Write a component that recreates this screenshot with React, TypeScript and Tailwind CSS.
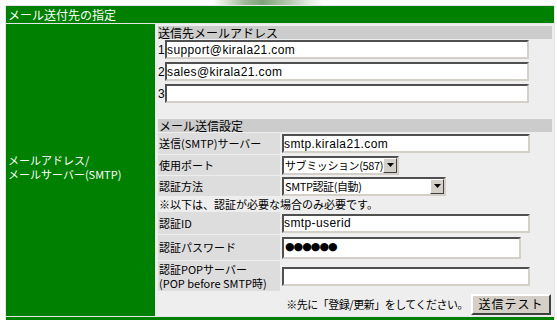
import React from "react";

const inset =
  "border-2 border-t-[#505050] border-l-[#505050] border-b-[#d4d0c8] border-r-[#d4d0c8] bg-white";

function TextBox({ value, w, h = "h-[19px]" }: { value: string; w: string; h?: string }) {
  return (
    <input
      readOnly
      value={value}
      className={`${inset} ${w} ${h} px-0 font-['Liberation_Sans',sans-serif] text-[12px] tracking-[0.4px] text-black outline-none`}
    />
  );
}

function FakeSelect({ label, w }: { label: string; w: string }) {
  return (
    <div className={`${inset} ${w} h-[19px] flex items-center justify-between`}>
      <span className="pl-px text-[11px] leading-[15px] tracking-[-0.4px] whitespace-nowrap">{label}</span>
      <div className="shrink-0 w-[14px] h-[15px] bg-[#d4d0c8] border border-t-white border-l-white border-b-[#404040] border-r-[#404040] flex items-center justify-center">
        <svg width="7" height="4" viewBox="0 0 7 4">
          <path d="M0 0h7L3.5 4z" fill="#000" />
        </svg>
      </div>
    </div>
  );
}

function Row({ label, h, children }: { label: React.ReactNode; h: string; children: React.ReactNode }) {
  return (
    <div className={`flex gap-px ${h}`}>
      <div className="w-[122px] bg-[#dddddd] flex items-center px-px leading-[13px]">{label}</div>
      <div className="flex-1 flex items-center pl-px">{children}</div>
    </div>
  );
}

export default function App() {
  const addresses = ["support@kirala21.com", "sales@kirala21.com", ""];

  return (
    <div className="w-[557px] h-[320px] overflow-hidden bg-white text-black text-[11px] font-['Noto_Sans_CJK_JP','Noto_Sans',sans-serif]">
      {/* 上部の飾り */}
      <div className="h-[5px] bg-[linear-gradient(90deg,#ffffff_0px,#ffffff_212px,#dfe8da_225px,#9fb99a_245px,#7fa27a_262px,#b8cbb2_290px,#e8eee5_310px,#ffffff_325px)]" />

      <div className="ml-[5px] w-[550px] bg-[#e6e6e6] p-px flex flex-col gap-px">
        <div className="h-[17px] bg-[#008000] text-white text-[12px] leading-[17px] pl-[2px]">
          メール送付先の指定
        </div>

        <div className="flex gap-px h-[292px]">
          {/* 左: 項目名 */}
          <div className="w-[149px] bg-[#008000] text-white flex flex-col justify-center pl-[2px] leading-[14px] pb-[6px]">
            <div>メールアドレス/</div>
            <div>メールサーバー(SMTP)</div>
          </div>

          {/* 右: 設定 */}
          <div className="flex-1 bg-[#eeeeee] px-[2px] pt-[2px] flex flex-col">
            <div className="h-[13px] bg-[#cccccc] leading-[13px] text-[12px]">送信先メールアドレス</div>
            <div className="mt-px flex flex-col gap-[3px]">
              {addresses.map((a, i) => (
                <div key={i} className="flex items-center h-[19px]">
                  <span className="w-[7px] text-[12px] font-['Liberation_Sans',sans-serif]">{i + 1}</span>
                  <TextBox value={a} w="w-[364px]" />
                </div>
              ))}
            </div>

            <div className="mt-[16px] h-[13px] bg-[#cccccc] leading-[13px] text-[12px] pl-px">メール送信設定</div>
            <div className="mt-px flex flex-col gap-px">
              <Row label="送信(SMTP)サーバー" h="h-[21px]">
                <TextBox value="smtp.kirala21.com" w="w-[248px]" />
              </Row>
              <Row label="使用ポート" h="h-[20px]">
                <FakeSelect label="サブミッション(587)" w="w-[117px]" />
              </Row>
              <Row label="認証方法" h="h-[20px]">
                <FakeSelect label="SMTP認証(自動)" w="w-[164px]" />
              </Row>
              <div className="h-[14px] leading-[14px] pl-px">※以下は、認証が必要な場合のみ必要です。</div>
              <Row label="認証ID" h="h-[22px]">
                <TextBox value="smtp-userid" w="w-[248px]" />
              </Row>
              <Row label="認証パスワード" h="h-[25px]">
                <div className={`${inset} w-[239px] h-[22px] flex items-center pl-px text-[11px] tracking-[-1px] font-['DejaVu_Sans',sans-serif]`}>
                  ●●●●●●
                </div>
              </Row>
              <Row
                label={
                  <div className="leading-[14px]">
                    <div>認証POPサーバー</div>
                    <div>(POP before SMTP時)</div>
                  </div>
                }
                h="h-[30px]"
              >
                <TextBox value="" w="w-[248px]" />
              </Row>
              <div className="h-[24px] flex items-center justify-end gap-[3px] pr-px">
                <span className="text-[11px] tracking-[-0.5px]">※先に「登録/更新」をしてください。</span>
                <button className="w-[80px] h-[21px] bg-[#d4d0c8] border-2 border-t-white border-l-white border-b-[#404040] border-r-[#404040] text-[12px] leading-[16px] tracking-[1px]">
                  送信テスト
                </button>
              </div>
            </div>
          </div>
        </div>

        <div className="h-[4px] bg-[#008000]" />
      </div>
    </div>
  );
}
